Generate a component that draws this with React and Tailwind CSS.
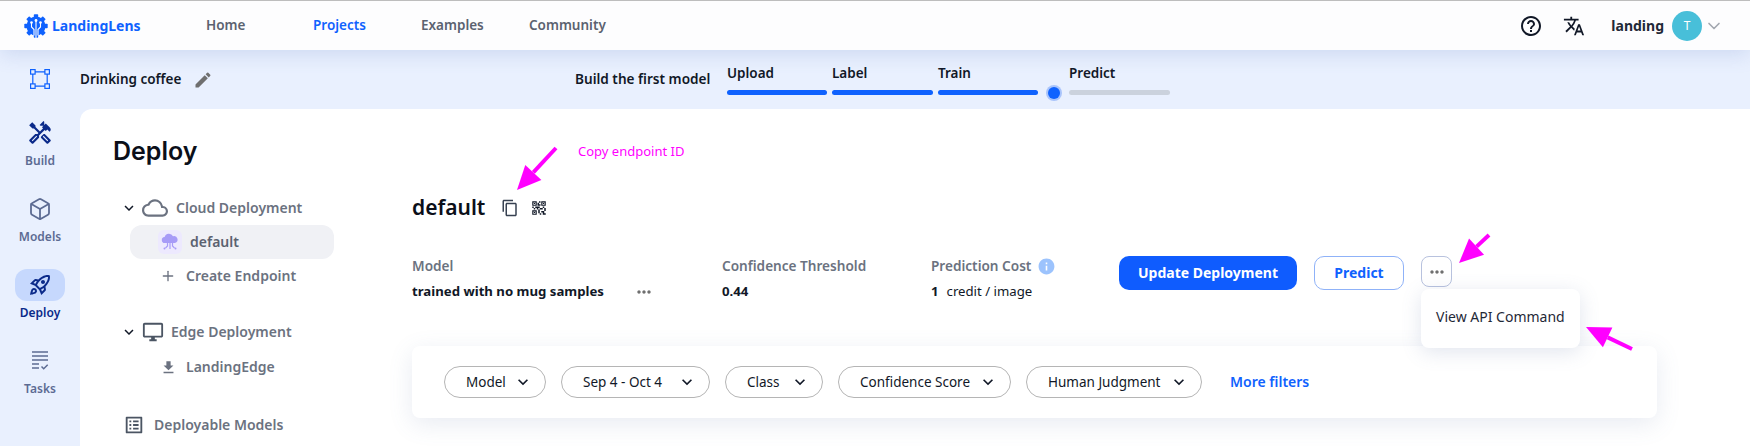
import { Box, ChevronDown, Plus } from "lucide-react";
import {
  MdOutlineHandyman,
  MdOutlineRocketLaunch,
  MdOutlineCloud,
  MdOutlineDesktopWindows,
  MdFileDownload,
  MdOutlineListAlt,
  MdOutlineContentCopy,
  MdQrCode2,
  MdHelpOutline,
  MdTranslate,
  MdEdit,
  MdInfo,
  MdKeyboardArrowDown,
  MdMoreHoriz,
} from "react-icons/md";

const font = { fontFamily: '"Noto Sans", sans-serif' };
const teeth = [0, 45, 90, 135, 180, 225, 270, 315];

function Logo() {
  return (
    <svg width="24" height="24" viewBox="0 0 24 24">
      <circle cx="12" cy="12" r="9.500" fill="#0f62fe" />
      {teeth.map((t) => (
        <rect key={t} x="9.800" y="0.300" width="4.400" height="5" rx="0.800" fill="#0f62fe" transform={`rotate(${t} 12 12)`} />
      ))}
      <g fill="none" stroke="#fff" strokeWidth="1.100">
        <path d="M12 7v17M7.500 8.500v4.500l2.500 2.500v6M16.500 8.500v4.500l-2.500 2.500v6" />
      </g>
      <circle cx="12" cy="6.500" r="1.400" fill="#fff" />
      <circle cx="7.500" cy="8.500" r="1.300" fill="#fff" />
      <circle cx="16.500" cy="8.500" r="1.300" fill="#fff" />
    </svg>
  );
}

function EndpointIcon() {
  return (
    <svg width="18" height="18" viewBox="0 0 18 18">
      <path d="M4 10a3 3 0 0 1-.4-6A4.500 4.500 0 0 1 12 3.200 3.500 3.500 0 0 1 14 10z" fill="#a79bf7" />
      <g fill="none" stroke="#a79bf7" strokeWidth="1.200">
        <path d="M9 10v6M6.500 10v3l-2 2M11.500 10v3l2 2" />
      </g>
      <circle cx="3.500" cy="15.500" r="1" fill="#a79bf7" />
      <circle cx="14.500" cy="15.500" r="1" fill="#a79bf7" />
    </svg>
  );
}

function CropIcon() {
  return (
    <svg width="20" height="20" viewBox="0 0 20 20" fill="none" stroke="#0f62fe" strokeWidth="1.200">
      <rect x="0.600" y="0.600" width="4.500" height="4.500" />
      <rect x="14.900" y="0.600" width="4.500" height="4.500" />
      <rect x="0.600" y="14.900" width="4.500" height="4.500" />
      <rect x="14.900" y="14.900" width="4.500" height="4.500" />
      <path d="M5 2.800h10M5 17.200h10M2.800 5v10M17.200 5v10" />
    </svg>
  );
}

function TasksIcon() {
  return (
    <svg width="18" height="20" viewBox="0 0 18 20" fill="none" stroke="#5c6b93" strokeWidth="1.500">
      <path d="M1 1h16M1 5h16M1 9h16M1 13h7M1 17h7" />
      <path d="M10.500 15.500l2.200 2.200 4-4" />
    </svg>
  );
}

function Arrow({ className, x1, y1, x2, y2 }) {
  // pink annotation arrow, head at x2,y2
  const a = Math.atan2(y2 - y1, x2 - x1);
  const l = 24;
  const w = 11;
  const bx = x2 - Math.cos(a) * l;
  const by = y2 - Math.sin(a) * l;
  const nx = -Math.sin(a) * w;
  const ny = Math.cos(a) * w;
  return (
    <svg className={className} width="80" height="80" viewBox="0 0 80 80">
      <line x1={x1} y1={y1} x2={bx} y2={by} stroke="#ff00ff" strokeWidth="4" />
      <polygon points={`${x2},${y2} ${bx + nx},${by + ny} ${bx - nx},${by - ny}`} fill="#ff00ff" />
    </svg>
  );
}

function SideItem({ icon, label, active }) {
  return (
    <div className="flex flex-col items-center h-[76px]">
      <div className={`w-[50px] h-8 rounded-xl flex items-center justify-center ${active ? "bg-[#c6d8fd]" : ""}`}>
        {icon}
      </div>
      <span className={`mt-[4px] text-xs font-semibold ${active ? "text-[#0b2a8a]" : "text-[#5c6b93]"}`}>{label}</span>
    </div>
  );
}

function Step({ label, w = "w-[100px]", grey }) {
  return (
    <div className={`${w} flex flex-col gap-[8px]`}>
      <span className="text-[13.500px] leading-[18px] font-semibold text-[#111827]">{label}</span>
      <div className={`h-[5px] rounded-full ${grey ? "bg-[#cbd2dd]" : "bg-[#0f62fe]"}`} />
    </div>
  );
}

function FilterPill({ label, w }) {
  return (
    <div className={`${w} h-8 flex items-center justify-between pl-[21px] pr-3 rounded-full border border-[#b5b5b5] text-[13.500px] text-[#111827]`}>
      <span>{label}</span>
      <MdKeyboardArrowDown size={20} className="text-[#111827]" />
    </div>
  );
}

export default function App() {
  return (
    <div className="relative h-[446px] w-[1750px] overflow-hidden flex flex-col bg-[#e9f0fe]" style={font}>
      {/* top bar */}
      <header className="h-[50px] flex-shrink-0 flex items-center bg-[#fdfdfe] border-t border-[#bdbdbd] shadow-[0_4px_20px_rgba(90,120,190,0.2)] z-10 pl-6 pr-[26px]">
        <Logo />
        <span className="ml-[4px] w-[154px] text-sm font-bold text-[#0f62fe]">LandingLens</span>
        <nav className="flex text-[13.500px] font-semibold text-[#5b6270]">
          <span className="w-[107px]">Home</span>
          <span className="w-[108px] text-[#0f62fe]">Projects</span>
          <span className="w-[108px]">Examples</span>
          <span>Community</span>
        </nav>
        <div className="ml-auto flex items-center">
          <MdHelpOutline size={24} className="text-[#111827]" />
          <MdTranslate size={22} className="ml-[20px] text-[#111827]" />
          <span className="ml-[26px] text-sm font-bold text-[#1f2937]">landing</span>
          <div className="ml-2 w-[30px] h-[30px] rounded-full bg-[#48bfd9] flex items-center justify-center text-white text-xs">T</div>
          <ChevronDown size={20} className="ml-[2px] text-[#a3a8b0]" />
        </div>
      </header>

      <div className="flex flex-1 min-h-0">
        {/* left rail */}
        <aside className="w-20 flex-shrink-0 flex flex-col items-center">
          <div className="h-[67px] pt-[19px]">
            <CropIcon />
          </div>
          <SideItem label="Build" icon={<MdOutlineHandyman size={26} className="text-[#0b2a8a]" />} />
          <SideItem label="Models" icon={<Box size={24} strokeWidth={1.800} className="text-[#5c6b93]" />} />
          <SideItem active label="Deploy" icon={<MdOutlineRocketLaunch size={24} className="text-[#0b2a8a]" />} />
          <SideItem label="Tasks" icon={<TasksIcon />} />
        </aside>

        <div className="flex-1 min-w-0 flex flex-col">
          {/* project header + progress */}
          <div className="h-[59px] flex-shrink-0 flex items-center">
            <div className="w-[495px] flex items-center">
              <span className="text-[13.500px] font-semibold text-[#111827]">Drinking coffee</span>
              <MdEdit size={20} className="ml-[12px] text-[#6f6f6f]" />
            </div>
            <span className="w-[152px] text-[13.600px] font-semibold text-[#111827]">Build the first model</span>
            <div className="flex items-end gap-[5px]">
              <Step label="Upload" />
              <Step label="Label" w="w-[101px]" />
              <Step label="Train" />
              <div className="w-[21px] h-[5px] relative">
                <div className="absolute left-[5px] -top-[3.500px] w-3 h-3 rounded-full bg-[#0f62fe] ring-2 ring-[#a9c4fb]" />
              </div>
              <Step label="Predict" w="w-[101px]" grey />
            </div>
          </div>

          {/* main panel */}
          <main className="flex-1 min-h-0 flex bg-white rounded-tl-xl">
            <div className="w-[332px] flex-shrink-0 pl-[33px] pt-[26px]">
              <h1 className="text-[25px] leading-8 font-semibold text-[#0b0f19]" style={{ fontFamily: "Inter, sans-serif" }}>Deploy</h1>
              <div className="mt-[29px] pl-[10px] flex items-center h-[24px] text-sm font-semibold text-[#6b7280]">
                <MdKeyboardArrowDown size={18} className="text-[#111827] -ml-[3px]" />
                <MdOutlineCloud size={26} className="ml-[4px] text-[#6b7280]" />
                <span className="ml-[8px]">Cloud Deployment</span>
              </div>
              <div className="mt-[5px] ml-[17px] w-[204px] h-[34px] rounded-xl bg-[#f0f1f5] flex items-center pl-[28px] text-sm font-semibold text-[#5b6270]">
                <div className="w-6 h-6 rounded-md bg-[#ede9fe] flex items-center justify-center">
                  <EndpointIcon />
                </div>
                <span className="ml-2">default</span>
              </div>
              <div className="mt-[1px] pl-[48px] h-[32px] flex items-center text-sm font-semibold text-[#6b7280]">
                <Plus size={16} className="-ml-[1px]" />
                <span className="ml-[10px]">Create Endpoint</span>
              </div>
              <div className="mt-[28px] pl-[10px] flex items-center h-[24px] text-sm font-semibold text-[#6b7280]">
                <MdKeyboardArrowDown size={18} className="text-[#111827] -ml-[3px]" />
                <MdOutlineDesktopWindows size={22} className="ml-[4px] text-[#4b5563]" />
                <span className="ml-[7px]">Edge Deployment</span>
              </div>
              <div className="mt-[11px] pl-[48px] h-6 flex items-center text-sm font-semibold text-[#6b7280]">
                <MdFileDownload size={17} className="-ml-[1px]" />
                <span className="ml-[9px]">LandingEdge</span>
              </div>
              <div className="mt-[34px] pl-[10px] h-6 flex items-center text-sm font-semibold text-[#6b7280]">
                <MdOutlineListAlt size={22} className="text-[#4b5563]" />
                <span className="ml-[9px]">Deployable Models</span>
              </div>
            </div>

            <div className="flex-1 min-w-0 pt-[84px] pr-[93px]">
              <div className="flex items-center h-[30px]">
                <span className="text-[21px] font-semibold text-[#0b0f19]">default</span>
                <MdOutlineContentCopy size={18} className="ml-[16px] text-[#374151]" />
                <MdQrCode2 size={18} className="ml-[11px] text-[#111827]" />
              </div>
              <div className="mt-[33px] flex h-[46px]">
                <div className="w-[310px] flex flex-col justify-between">
                  <span className="text-[13.600px] font-semibold text-[#6b7280]">Model</span>
                  <div className="flex items-center text-[13.200px] font-bold text-[#111827]">
                    <span className="w-[222px]">trained with no mug samples</span>
                    <MdMoreHoriz size={20} className="text-[#6f6f6f]" />
                  </div>
                </div>
                <div className="w-[209px] flex flex-col justify-between">
                  <span className="text-[13.600px] font-semibold text-[#6b7280]">Confidence Threshold</span>
                  <span className="text-[13.200px] font-bold text-[#111827]">0.44</span>
                </div>
                <div className="w-[188px] flex flex-col justify-between">
                  <span className="flex items-center gap-[6px] text-[13.600px] font-semibold text-[#6b7280]">
                    Prediction Cost
                    <MdInfo size={19} className="text-[#9cc3fd]" />
                  </span>
                  <span className="text-[13.200px] text-[#111827]">
                    <b className="mr-2">1</b>credit / image
                  </span>
                </div>
                <button className="w-[178px] h-[34px] rounded-[10px] bg-[#0f5cfe] text-white text-sm font-bold">Update Deployment</button>
                <button className="ml-[17px] w-[90px] h-[34px] rounded-[10px] border border-[#8fb2f8] text-[#0f62fe] text-sm font-bold">Predict</button>
                <button className="ml-[17px] w-[31px] h-[31px] rounded-lg border border-[#b8c2de] flex items-center justify-center">
                  <MdMoreHoriz size={20} className="text-[#6f6f6f]" />
                </button>
              </div>
              <div className="mt-[44px] h-[72px] rounded-lg bg-white shadow-[0_6px_24px_rgba(90,110,160,0.14)] flex items-center pl-8 gap-[15px]">
                <FilterPill label="Model" w="w-[102px]" />
                <FilterPill label="Sep 4 - Oct 4" w="w-[149px]" />
                <FilterPill label="Class" w="w-[98px]" />
                <FilterPill label="Confidence Score" w="w-[173px]" />
                <FilterPill label="Human Judgment" w="w-[176px]" />
                <span className="ml-[13px] text-sm font-semibold text-[#0f62fe]">More filters</span>
              </div>
            </div>
          </main>
        </div>
      </div>

      {/* overlays: dropdown + annotations */}
      <div className="absolute left-[1421px] top-[289px] w-[159px] h-[59px] rounded-lg bg-white shadow-[0_4px_20px_rgba(90,110,160,0.18)] flex items-center pl-[15px] pb-[3px] text-sm text-[#1f2937] z-20">
        View API Command
      </div>
      <span className="absolute left-[578px] top-[142px] text-[13px] text-[#ff00ff]">Copy endpoint ID</span>
      <Arrow className="absolute left-[500px] top-[130px] z-30" x1={56} y1={18} x2={17} y2={60} />
      <Arrow className="absolute left-[1450px] top-[225px] z-30" x1={39} y1={10} x2={9} y2={38} />
      <Arrow className="absolute left-[1568px] top-[313px] z-30" x1={64} y1={36} x2={18} y2={14} />
    </div>
  );
}
